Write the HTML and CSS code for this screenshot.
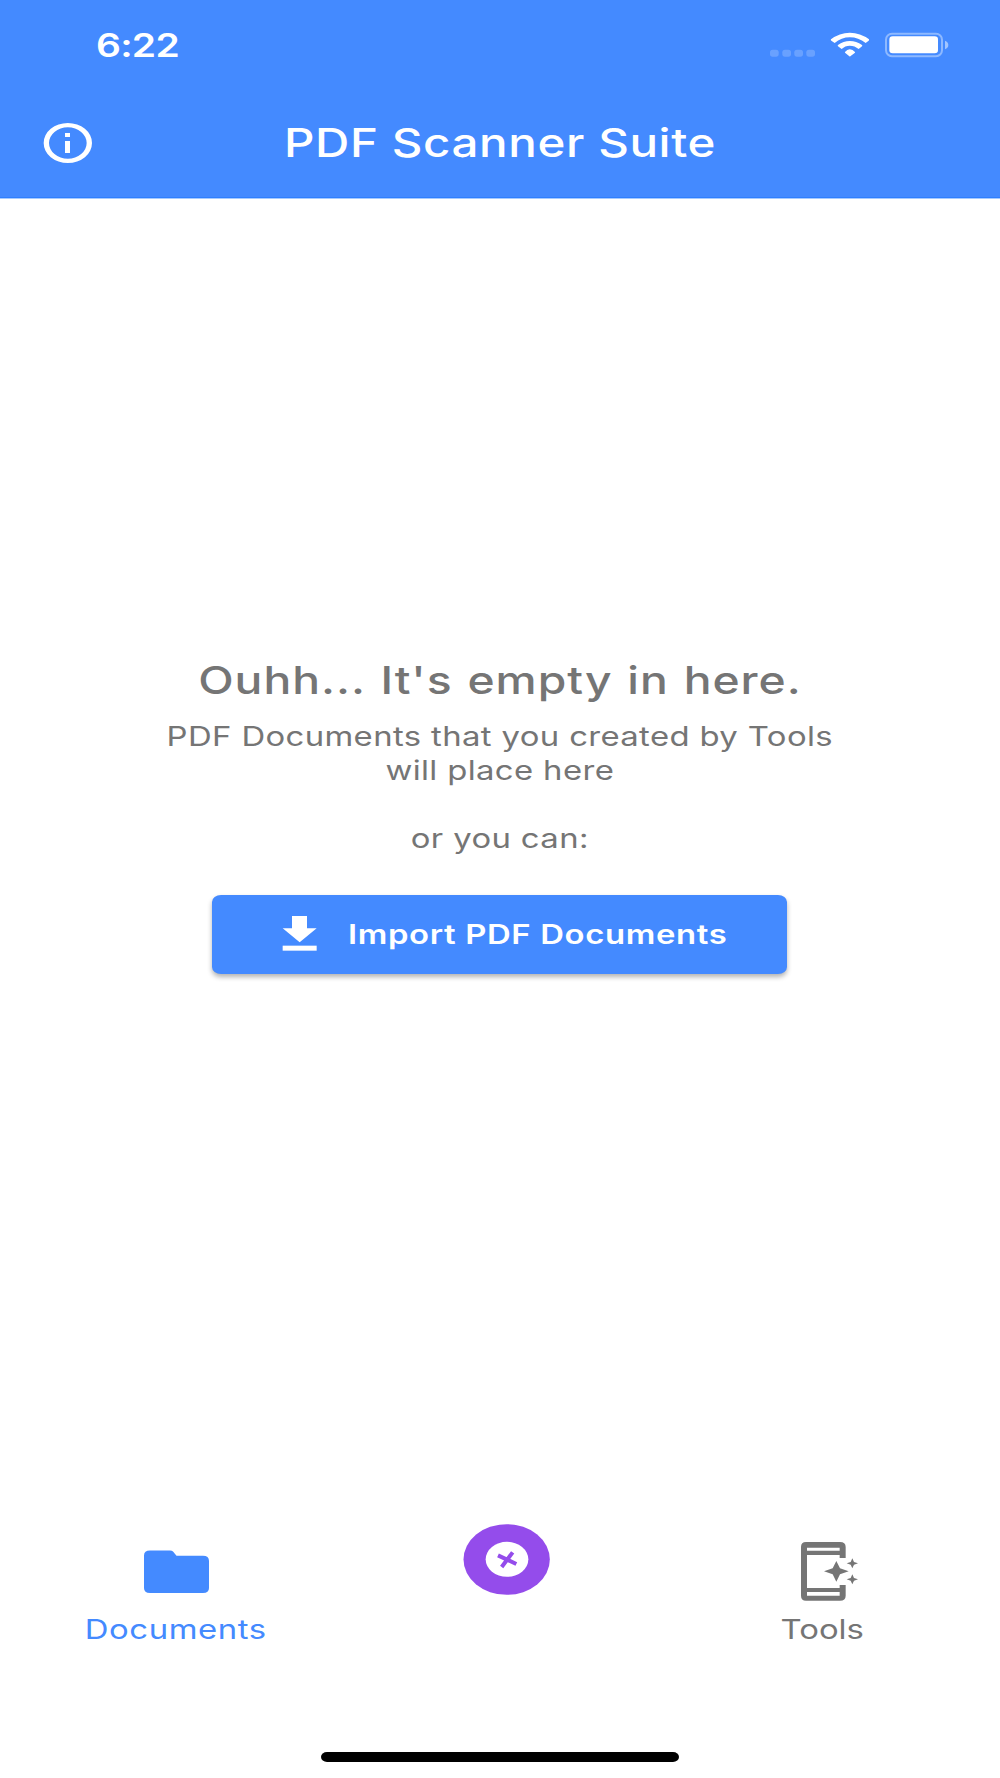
FILE: index.html
```
<!DOCTYPE html>
<html>
<head>
    <meta charset="utf-8">
    <title>PDF Scanner Suite</title>
    <link rel="stylesheet" href="styles.css">
</head>
<body>
    <header class="header">
        <div class="status-bar">
            <span class="wide time">6:22</span>
            <div class="status-icons">
                <svg width="45" height="26" viewBox="0 0 135 78" fill="#fff" opacity="0.2">
                    <rect x="0" y="53" width="26" height="21" rx="8"/>
                    <rect x="37" y="53" width="26" height="21" rx="8"/>
                    <rect x="73" y="53" width="26" height="21" rx="8"/>
                    <rect x="109" y="53" width="26" height="21" rx="8"/>
                </svg>
                <svg class="wifi" width="40" height="26" viewBox="0 0 120 78" fill="#fff">
                    <path d="M3 22Q28 2 59.500 2T117 22Q118 24 116 26L107 33Q85 16 59.500 16T14 33L4 26Q1 24 3 22Z"/>
                    <path d="M24 39Q40 27 59.500 27T96 39Q98 41 96 43L86 51Q74 41 59.500 41T35 51L24 43Q22 41 24 39Z"/>
                    <path d="M45 60Q51 52 59.500 52T75 60Q76 62 74 63L61 73Q59.500 74 58 73L46 63Q44 62 45 60Z"/>
                </svg>
                <svg width="64" height="26" viewBox="0 0 192 78" fill="#fff">
                    <rect x="3" y="5" width="168" height="68" rx="18" fill="none" stroke="#fff" stroke-width="6" opacity="0.4"/>
                    <rect x="13" y="13" width="146" height="51" rx="10"/>
                    <path d="M180 26Q190 30 190 39T180 52Z" opacity="0.5"/>
                </svg>
            </div>
        </div>
        <div class="app-bar">
            <svg class="info" width="50" height="42" viewBox="0 0 150 126" fill="#fff">
                <path fill-rule="evenodd" d="M2 63A72.500 60 0 0 1 147 63A72.500 60 0 0 1 2 63ZM18 63A56.500 47 0 0 0 131 63A56.500 47 0 0 0 18 63Z"/>
                <rect x="66" y="33" width="15" height="12"/>
                <rect x="66" y="57" width="15" height="36"/>
            </svg>
            <h1 class="wide title">PDF Scanner Suite</h1>
        </div>
    </header>

    <main class="content">
        <h2 class="wide">Ouhh... It's empty in here.</h2>
        <p class="wide">PDF Documents that you created by Tools<br>will place here<br><br>or you can:</p>
        <button type="button" class="import">
            <svg width="36" height="36" viewBox="0 0 108 108" fill="#fff">
                <path d="M30 0H75V37H104L53 79L2 37H30Z"/>
                <rect x="2" y="89" width="102" height="15"/>
            </svg>
            <span class="wide">Import PDF Documents</span>
        </button>
    </main>

    <nav class="tabs">
        <a class="tab active">
            <svg width="65" height="60" viewBox="0 0 65 60" fill="currentColor">
                <path d="M6 9.500H26Q28 9.500 29 10.500L32.500 14.800H59Q65 14.800 65 20V47Q65 52 59 52H6Q0 52 0 47V14.500Q0 9.500 6 9.500Z"/>
            </svg>
            <span class="wide documents">Documents</span>
        </a>
        <a class="add">
            <svg width="87" height="71" viewBox="0 0 261 213">
                <ellipse cx="131" cy="106.500" rx="129.500" ry="106" fill="#944ceb"/>
                <ellipse cx="132" cy="106" rx="64" ry="52.500" fill="#fff"/>
                <path d="M105 94L160 120M149 85L116 129" stroke="#944ceb" stroke-width="12"/>
            </svg>
        </a>
        <a class="tab">
            <svg class="tools" width="58" height="60" viewBox="0 0 174 180" fill="currentColor">
                <path fill-rule="evenodd" d="M18 3H120Q137 3 137 18V51H119V42H21V141H119V132H137V164Q137 179 120 179H18Q3 179 3 164V18Q3 3 18 3ZM21 20V29H119V20ZM21 153V164H119V153Z"/>
                <path d="M109 60L120 82L146 91L120 100L109 122L98 100L72 91L98 82Z"/>
                <path d="M157 52L162 63L174 67L162 71L157 82L152 71L140 67L152 63Z"/>
                <path d="M157 100L162 111L174 115L162 119L157 130L152 119L140 115L152 111Z"/>
            </svg>
            <span class="wide">Tools</span>
        </a>
    </nav>
    <div class="home-indicator"></div>
</body>
</html>
```
FILE: styles.css
```
* {
    box-sizing: border-box;
}
body {
    margin: 0;
    height: 1778px;
    display: flex;
    flex-direction: column;
    align-items: center;
    background-color: #fff;
    color: #757575;
    font-family: Inter, sans-serif;
    font-size: 27px;
}
h1, h2, p {
    margin: 0;
}
svg {
    display: block;
    flex: none;
}
.wide {
    display: inline-block;
    transform: scaleX(1.217);
    white-space: nowrap;
}
.header {
    width: 100%;
    height: 198px;
    background-color: #448aff;
    border-bottom: 1px solid #2f7fff;
    box-shadow: 0 1px 0 #a6caff;
    color: #fff;
}
.status-bar {
    display: flex;
    align-items: center;
    justify-content: space-between;
    height: 90px;
    padding: 0 51px 0 96px;
}
.time {
    font-size: 32px;
    font-weight: 600;
    letter-spacing: -0.6px;
    transform-origin: left;
}
.status-icons {
    display: flex;
}
.wifi {
    margin: 0 15px;
}
.app-bar {
    display: grid;
    grid-template-columns: 93px 1fr 93px;
    align-items: center;
    height: 106px;
}
.info {
    justify-self: end;
}
.title {
    padding-bottom: 2px;
    font-size: 39px;
    font-weight: 500;
    letter-spacing: 0.5px;
    text-align: center;
}
.content {
    flex: 1;
    display: flex;
    flex-direction: column;
    align-items: center;
    padding-top: 460px;
    text-align: center;
}
.content h2 {
    font-size: 38px;
    font-weight: 500;
    line-height: 45px;
    letter-spacing: 0.8px;
    word-spacing: 1.3px;
}
.content p {
    margin-top: 17px;
    line-height: 33.9px;
    letter-spacing: 0.3px;
}
.import {
    display: flex;
    align-items: center;
    gap: 30px;
    width: 575px;
    height: 79px;
    margin: 39px 1px 0 0;
    padding: 0 0 0 70px;
    background-color: #448aff;
    color: #fff;
    border: none;
    border-radius: 9px / 7px;
    box-shadow: 0 3px 5px rgba(0, 0, 0, 0.3);
    font-family: inherit;
    font-size: 27px;
    font-weight: 600;
    letter-spacing: 0.52px;
}
.import .wide {
    transform-origin: left;
}
.tabs {
    display: grid;
    grid-template-columns: 352px 309px 323px;
    width: 100%;
    height: 211px;
}
.tab {
    display: flex;
    flex-direction: column;
    align-items: center;
}
.tab .wide {
    margin-top: 12px;
    line-height: 34px;
}
.active {
    color: #448aff;
}
.documents {
    letter-spacing: 0.48px;
}
.tools {
    margin-left: 12px;
}
.add {
    justify-self: center;
    margin-top: -17px;
}
.home-indicator {
    width: 358px;
    height: 10px;
    margin-bottom: 16px;
    border-radius: 6px / 5px;
    background-color: #000;
}
```
